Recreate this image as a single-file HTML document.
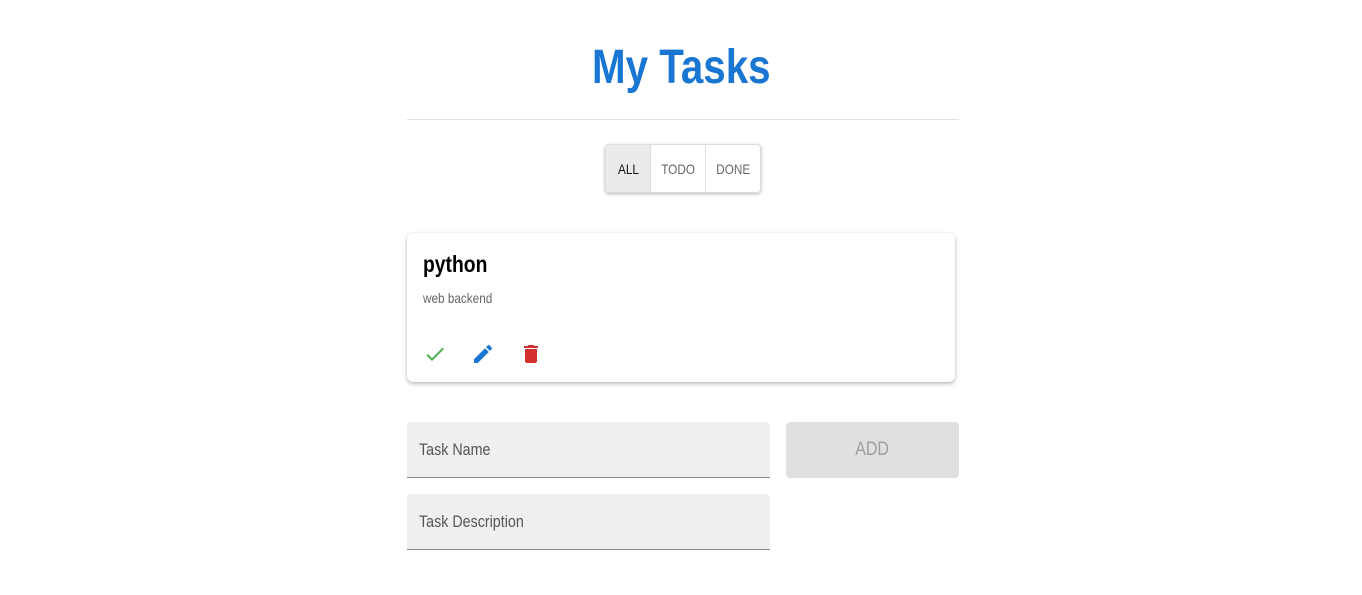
<!DOCTYPE html>
<html><head><meta charset="utf-8"><style>
*{box-sizing:border-box;margin:0;padding:0}
body{width:1362px;height:595px;background:#fff;font-family:"Liberation Sans",sans-serif;position:relative;overflow:hidden}
.n{display:inline-block;transform:scaleX(.84);transform-origin:left center;white-space:nowrap}
.nc{display:inline-block;transform:scaleX(.84);transform-origin:center center;white-space:nowrap}
h1{position:absolute;left:0;width:1362px;top:38px;text-align:center;color:#1976d2;font-size:48px;font-weight:bold;line-height:60px}
.hr{position:absolute;left:407px;width:552px;top:119px;border-top:1px solid #e0e0e0}
.tg{position:absolute;left:605px;top:144px;width:156px;height:49px;border-radius:4px;display:flex;box-shadow:0 1px 3px rgba(0,0,0,.3);overflow:hidden;border:1px solid #ddd}
.tg div{display:flex;align-items:center;justify-content:center;font-size:14px;color:#666}
.card{position:absolute;left:407px;top:233px;width:548px;height:149px;border-radius:6px;box-shadow:0 2px 4px rgba(0,0,0,.25),0 0 2px rgba(0,0,0,.08);background:#fff}
.card .t{position:absolute;left:16px;top:18px;font-size:23px;font-weight:bold;color:#000}
.card .d{position:absolute;left:16px;top:57px;font-size:14px;color:#666}
.f{position:absolute;left:407px;width:363px;height:56px;background:#efefef;border-bottom:1px solid #888;border-radius:4px 4px 0 0;padding:18px 12px;font-size:17px;color:#555}
.add{position:absolute;left:786px;top:422px;width:173px;height:56px;background:#e0e0e0;border-radius:4px;display:flex;align-items:center;justify-content:center;color:#9e9e9e;font-size:19px}
svg{position:absolute}
</style></head><body>
<h1><span class="nc">My Tasks</span></h1>
<div class="hr"></div>
<div class="tg"><div style="width:45px;background:#ebebeb;color:#111;border-right:1px solid #ddd"><span class="nc">ALL</span></div><div style="width:55px;border-right:1px solid #ddd"><span class="nc">TODO</span></div><div style="width:54px"><span class="nc">DONE</span></div></div>
<div class="card"><div class="t"><span class="n">python</span></div><div class="d"><span class="n">web backend</span></div>
<svg style="left:16px;top:109px" width="24" height="24" viewBox="0 0 24 24"><path fill="#4caf50" d="M9 16.17L4.83 12l-1.42 1.41L9 19 21 7l-1.41-1.41z"/></svg>
<svg style="left:64px;top:109px" width="24" height="24" viewBox="0 0 24 24"><path fill="#1976d2" d="M3 17.25V21h3.75L17.81 9.94l-3.75-3.75L3 17.25zM20.71 7.04c.39-.39.39-1.02 0-1.41l-2.34-2.34a.9959.9959 0 0 0-1.41 0l-1.830 1.83 3.75 3.75 1.83-1.83z"/></svg>
<svg style="left:112px;top:109px" width="24" height="24" viewBox="0 0 24 24"><path fill="#d32f2f" d="M6 19c0 1.1.9 2 2 2h8c1.1 0 2-.9 2-2V7H6v12zM19 4h-3.5l-1-1h-5l-1 1H5v2h14V4z"/></svg>
</div>
<div class="f" style="top:422px"><span class="n">Task Name</span></div>
<div class="add"><span class="nc">ADD</span></div>
<div class="f" style="top:494px"><span class="n">Task Description</span></div>
</body></html>
